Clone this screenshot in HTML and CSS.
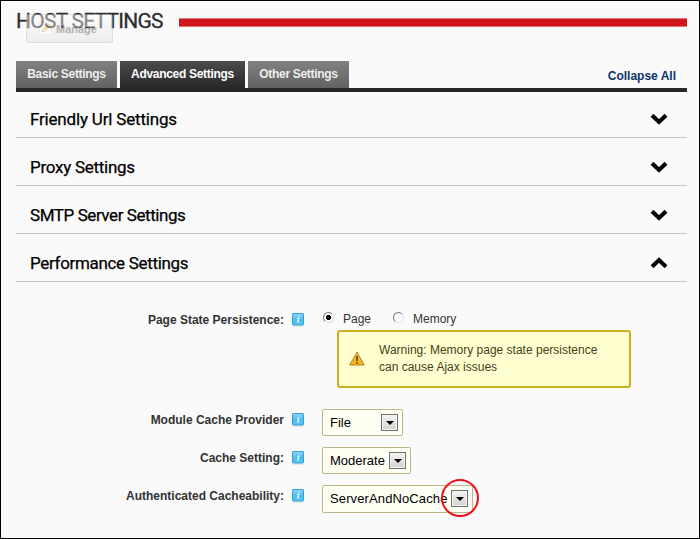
FILE: index.html
```html
<!DOCTYPE html>
<html lang="en">
<head>
<meta charset="utf-8">
<title>Host Settings</title>
<link rel="stylesheet" href="styles.css">
</head>
<body>
<svg class="defs" width="0" height="0">
  <defs>
    <linearGradient id="blue" x1="0" y1="0" x2="0" y2="1"><stop offset="0" stop-color="#8fd3f3"/><stop offset=".5" stop-color="#55bdee"/><stop offset="1" stop-color="#54c6f4"/></linearGradient>
    <linearGradient id="gold" x1="0" y1="0" x2="0" y2="1"><stop offset="0" stop-color="#f6c75a"/><stop offset="1" stop-color="#f4b400"/></linearGradient>
    <symbol id="info" viewBox="0 0 12 14"><path d="M1 13.2h10" stroke="#ddd"/><rect x=".5" y=".5" width="11" height="11.5" rx=".6" fill="url(#blue)" stroke="#35a0d8"/><path d="M6.7 3.1h.8M5.3 5.3h1.4L5.7 9h1.2" fill="none" stroke="#fff" stroke-width="1.1"/></symbol>
    <symbol id="chevron" viewBox="0 0 18 12"><path d="M2 2.2 9 9l7-6.8" fill="none" stroke="#000" stroke-width="4"/></symbol>
  </defs>
</svg>
<div class="page">
  <header class="head">
    <h1>HOST SETTINGS</h1>
    <div class="rule"></div>
    <div class="manage"><svg width="13" height="13" viewBox="0 0 13 13"><rect x=".5" y=".5" width="12" height="12" fill="#fff" stroke="#ddd"/><path d="m3 10 1-3 6-5 2 2-6 5z" fill="#f0c67a" stroke="#c39a58" stroke-width=".7"/></svg><span>Manage</span></div>
  </header>
  <nav class="tabs">
    <div class="tab basic"><span>Basic Settings</span></div>
    <div class="tab active"><span>Advanced Settings</span></div>
    <div class="tab other"><span>Other Settings</span></div>
    <div class="collapse"><span>Collapse All</span></div>
  </nav>
  <main>
    <div class="section first"><h2 class="t1">Friendly Url Settings</h2><svg width="18" height="12"><use href="#chevron"/></svg></div>
    <div class="section"><h2 class="t2">Proxy Settings</h2><svg width="18" height="12"><use href="#chevron"/></svg></div>
    <div class="section"><h2 class="t3">SMTP Server Settings</h2><svg width="18" height="12"><use href="#chevron"/></svg></div>
    <div class="section"><h2 class="t4">Performance Settings</h2><svg class="up" width="18" height="12"><use href="#chevron"/></svg></div>
    <div class="row persistence">
      <label><span class="l1">Page State Persistence:</span></label>
      <svg class="info" width="12" height="14"><use href="#info"/></svg>
      <div class="control">
        <div class="radios"><i class="radio on"></i><span class="page-opt">Page</span><i class="radio"></i><span>Memory</span></div>
        <div class="warning">
          <svg width="16" height="15" viewBox="0 0 16 15"><path d="M8 1 15.2 14H.8z" fill="url(#gold)" stroke="#b9802a" stroke-linejoin="round"/><path d="M8 5v5M8 11v1.6" stroke="#594414" stroke-width="1.7"/></svg>
          <p>Warning: Memory page state persistence<br>can cause Ajax issues</p>
        </div>
      </div>
    </div>
    <div class="row">
      <label><span class="l2">Module Cache Provider</span></label>
      <svg class="info" width="12" height="14"><use href="#info"/></svg>
      <div class="control"><div class="select file"><span>File</span><i class="arrow"></i></div></div>
    </div>
    <div class="row">
      <label><span class="l3">Cache Setting:</span></label>
      <svg class="info" width="12" height="14"><use href="#info"/></svg>
      <div class="control"><div class="select moderate"><span>Moderate</span><i class="arrow"></i></div></div>
    </div>
    <div class="row last">
      <label><span class="l4">Authenticated Cacheability:</span></label>
      <svg class="info" width="12" height="14"><use href="#info"/></svg>
      <div class="control"><div class="select server"><span>ServerAndNoCache</span><i class="arrow"></i><b class="ring"></b></div></div>
    </div>
  </main>
</div>
</body>
</html>
```
FILE: styles.css
```css
* { box-sizing: border-box; }
body { margin: 0; font: 12px "Liberation Sans", Arial, sans-serif; color: #333; }
.defs { position: absolute; }
.page { width: 700px; height: 539px; border: 1px solid #000; background: #fafafa; padding: 0 12px 0 15px; overflow: hidden; }
h1, h2, p { margin: 0; white-space: nowrap; }
.head { position: relative; height: 60px; display: flex; padding-top: 8px; }
h1 { width: 163px; font: 400 21px/25px Roboto, sans-serif; letter-spacing: -.75px; color: #2d2d2d; -webkit-text-stroke: .3px #2d2d2d; }
.rule { flex: 1; height: 9px; margin-top: 9px; background: #d0161c; border-top: 1px solid #e3787c; border-bottom: 1px solid #e3787c; }
.manage { position: absolute; left: 10px; top: 13px; width: 87px; height: 29px; display: flex; align-items: center; padding-left: 12px; gap: 4px; border: 1px solid #bbb; border-radius: 2px; background: linear-gradient(#fff, #ddd); color: #555; font-size: 11px; font-weight: bold; opacity: .45; }
.tabs { height: 31px; display: flex; gap: 3px; border-bottom: 4px solid #282828; }
.tab { height: 27px; line-height: 26px; text-align: center; letter-spacing: -.3px; background: linear-gradient(#818181, #626262); color: #eee; font-weight: bold; white-space: nowrap; }
.basic, .other { width: 101px; }
.active { width: 125px; background: linear-gradient(#4c4c4c, #282828); color: #fff; }
.collapse { margin-left: auto; padding-right: 11px; line-height: 30px; font-weight: bold; color: #0c3568; }
.section { height: 48px; display: flex; align-items: flex-end; justify-content: space-between; padding: 0 19px 6px 14px; border-bottom: 1px solid #c8c8c8; }
.first { height: 46px; }
h2 { font: 400 17px/24px Roboto, sans-serif; color: #000; -webkit-text-stroke: .25px #000; }
.t1 { letter-spacing: -.18px; }
.t2 { letter-spacing: -.27px; }
.t3 { letter-spacing: -.43px; }
.t4 { letter-spacing: -.32px; }
.section svg { margin-bottom: 6px; }
.up { transform: rotate(180deg); }
.row { display: flex; height: 38px; }
.persistence { height: 100px; margin-top: 30px; }
label { width: 268px; text-align: right; font-weight: bold; line-height: 16px; white-space: nowrap; }
.info { margin: 1px 18px 0 8px; }
.control { margin-top: -3px; }
.persistence .control { margin-top: 0; }
.radios { display: flex; height: 14px; line-height: 14px; }
.radio { width: 11px; height: 11px; margin-right: 9px; border-radius: 50%; border: 1px solid; border-color: #777 #ddd #ddd #777; background: #fff; }
.radio.on { background: radial-gradient(circle, #000 2.3px, #fff 2.8px); }
.page-opt { width: 49px; }
.radios .radio { margin-left: 1px; }
.warning { width: 294px; height: 58px; margin: 4px 0 0 15px; padding: 10px 0 0 10px; display: flex; border: 2px solid #cab020; border-radius: 3px; background: #ffffcf; }
.warning svg { margin: 9px 14px 0 0; }
.warning p { line-height: 17px; color: #443f20; }
.select { position: relative; display: flex; height: 27px; padding: 4px 4px 0 7px; justify-content: space-between; border: 1px solid #bdb68a; border-radius: 2px; background: #fffff4; color: #000; font-size: 13px; line-height: 18px; white-space: nowrap; }
.file { width: 81px; }
.moderate { width: 89px; }
.server { width: 151px; height: 28px; letter-spacing: .12px; }
.arrow { width: 17px; height: 17px; border: 1px solid #707070; background: linear-gradient(#f3f3f3, #d2d2d2); box-shadow: inset 0 0 0 1px #f4f4f4; display: grid; place-items: center; flex: none; }
.arrow::after { content: ""; border: 4px solid transparent; border-top-color: #000; border-bottom: 0; }
.ring { position: absolute; left: 118px; top: -7px; width: 38px; height: 38px; border: 2px solid #f0101a; border-radius: 50%; }
```
